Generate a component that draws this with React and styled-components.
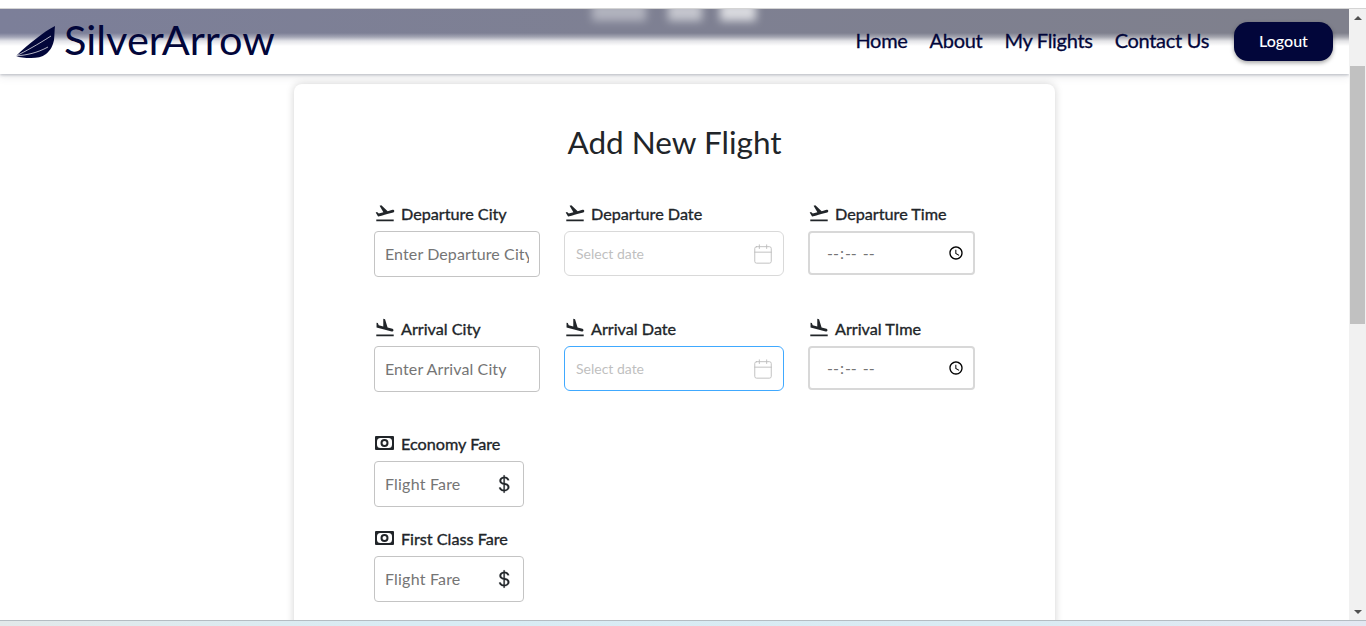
import React from 'react'
import styled, { createGlobalStyle } from 'styled-components'
import { MdFlightTakeoff, MdFlightLand } from 'react-icons/md'
import { BsCurrencyDollar } from 'react-icons/bs'
import { Calendar } from 'lucide-react'

const GlobalStyle = createGlobalStyle`
  html, body { margin: 0; height: 100%; overflow: hidden; background: #fff; }
  #root { height: 100%; }
  * { box-sizing: border-box; }
`

const Frame = styled.div`
  height: 626px;
  display: flex;
  flex-direction: column;
  font-family: Lato, "Liberation Sans", sans-serif;
  color: #212529;
`

const TopStrip = styled.div`
  height: 9px;
  flex: none;
  background: #fff;
  border-bottom: 1px solid #d4d4d4;
`

const Middle = styled.div`
  flex: 1;
  min-height: 0;
  display: flex;
`

const Page = styled.div`
  flex: 1;
  min-width: 0;
  position: relative;
  overflow: hidden;
  background: #fff;
`

const Navbar = styled.header`
  height: 65px;
  position: relative;
  display: flex;
  align-items: center;
  justify-content: space-between;
  padding: 0 16px;
  background:
    linear-gradient(to bottom, rgba(255, 255, 255, 0) 24px, rgba(255, 255, 255, 0.3) 28px, rgba(255, 255, 255, 0.78) 32px, #fff 37px),
    linear-gradient(to right, #7c7f99, #7e8093 45%, #7f808c);
  box-shadow: 0 1px 3px rgba(60, 70, 90, 0.35), 0 4px 8px rgba(60, 70, 90, 0.08);
  overflow: hidden;
`

const HeroBlur = styled.div`
  position: absolute;
  top: -6px;
  height: 18px;
  left: ${p => p.$left}px;
  width: ${p => p.$width}px;
  background: rgba(255, 255, 255, ${p => p.$alpha});
  filter: blur(4px);
`

const Brand = styled.div`
  display: flex;
  align-items: center;
  gap: 8px;
  padding-bottom: 4px;
  font-size: 41.5px;
  line-height: 1;
  color: #02063a;
  position: relative;
`

const WingSvg = styled.svg`
  margin-top: 5px;
  flex: none;
`

const Links = styled.nav`
  display: flex;
  align-items: center;
  position: relative;
`

const NavLink = styled.a`
  font-size: 20px;
  letter-spacing: -0.3px;
  margin-right: 22px;
  padding-bottom: 4px;
  color: #02063a;
  -webkit-text-stroke: 0.3px #02063a;
`

const LogoutButton = styled.button`
  width: 99px;
  height: 39px;
  margin-left: 3px;
  padding: 0 0 2px;
  border: 0;
  border-radius: 14px;
  background: #02063a;
  color: #fff;
  font: 500 16px Lato, "Liberation Sans", sans-serif;
  box-shadow: 0 2px 4px rgba(0, 0, 0, 0.35);
`

const Card = styled.main`
  width: 761px;
  margin: 10px 0 0 294px;
  height: 700px;
  padding: 38px 80px 0;
  background: #fff;
  border-radius: 8px;
  box-shadow: 0 0 8px rgba(0, 0, 0, 0.18);
`

const Title = styled.h1`
  margin: 0 0 40px;
  font-size: 31.5px;
  font-weight: 400;
  line-height: 40px;
  text-align: center;
  color: #212529;
`

const Row = styled.div`
  display: flex;
  gap: 24px;
  margin-bottom: ${p => p.$gap}px;
`

const Field = styled.div`
  width: ${p => p.$width}px;
  flex: none;
`

const Label = styled.label`
  display: flex;
  align-items: center;
  gap: 5px;
  height: 22px;
  margin-bottom: 7px;
  font-size: 16.2px;
  font-weight: 400;
  color: #212529;
  -webkit-text-stroke: 0.35px #212529;
  svg { flex: none; }
`

const TextInput = styled.input`
  width: 100%;
  height: 46px;
  padding: 0 10px 2px;
  border: 1px solid #c4c4c4;
  border-radius: 4px;
  outline: 0;
  background: #fff;
  font: 400 16px Lato, "Liberation Sans", sans-serif;
  letter-spacing: 0.1px;
  color: #495057;
  &::placeholder { color: #757575; opacity: 1; }
`

const FareBox = styled.div`
  display: flex;
  align-items: center;
  height: 46px;
  padding: 0 9px 0 10px;
  border: 1px solid #c4c4c4;
  border-radius: 4px;
`

const FareInput = styled.input`
  flex: 1;
  min-width: 0;
  border: 0;
  outline: 0;
  padding: 0 0 2px;
  font: 400 16px Lato, "Liberation Sans", sans-serif;
  letter-spacing: 0.2px;
  &::placeholder { color: #757575; opacity: 1; }
`

const DateBox = styled.div`
  display: flex;
  align-items: center;
  justify-content: space-between;
  height: 45px;
  padding: 0 9px 0 11px;
  border: 1px solid ${p => (p.$focused ? '#40a9ff' : '#d9d9d9')};
  border-radius: 6px;
  font-size: 14px;
  color: #bfbfbf;
`

const TimeInput = styled.input`
  width: 100%;
  height: 44px;
  padding: 0 5px 0 16px;
  border: 2px solid #d8d8d8;
  border-radius: 4px;
  outline: 0;
  background: #fff;
  font: 400 16px Lato, "Liberation Sans", sans-serif;
  color: #757575;
`

const Scrollbar = styled.div`
  width: 17px;
  flex: none;
  display: flex;
  flex-direction: column;
  align-items: center;
  background: #f1f1f1;
`

const ScrollArrow = styled.div`
  height: 17px;
  flex: none;
  display: flex;
  align-items: center;
  justify-content: center;
  &::before {
    content: '';
    border-left: 4px solid transparent;
    border-right: 4px solid transparent;
    ${p => (p.$up ? 'border-bottom' : 'border-top')}: 4px solid #505050;
  }
`

const ScrollThumb = styled.div`
  width: 15px;
  height: 258px;
  margin-top: 40px;
  background: #c1c1c1;
`

const ScrollSpace = styled.div`
  flex: 1;
`

const BottomStrip = styled.div`
  height: 6px;
  flex: none;
  border-top: 1px solid #b4bcc2;
  background: linear-gradient(to right, #e2e9ea, #d8ecf4 30%, #d9ebf3 75%, #e3e8f2);
`

const WingLogo = () => (
  <WingSvg width="40" height="32" viewBox="0 0 40 32" fill="#02063a">
    <path d="M39 0 C33 3 27 7 21 12 C13 18 6 24 0 30 C3 31.500 9 32 15 32 C21 32 26 31 30 28 C35 24 37 19 38 14 C38.500 9 38.500 4 39 0 Z" />
    <path d="M0 30 C10 25 21 19 35 10" stroke="#fff" strokeWidth="0.7" fill="none" />
    <path d="M0 30 C11 29 21 27 32 21" stroke="#fff" strokeWidth="0.7" fill="none" />
  </WingSvg>
)

const MoneyIcon = () => (
  <svg width="19" height="14" viewBox="0 0 19 14" style={{ margin: '0 2px 0 1px' }}>
    <rect width="19" height="14" rx="1" fill="#212529" />
    <rect x="2" y="2" width="15" height="10" rx="3.500" fill="#fff" />
    <circle cx="9.500" cy="7" r="3" fill="none" stroke="#212529" strokeWidth="2" />
  </svg>
)

const TakeoffLabel = ({ children }) => (
  <Label><MdFlightTakeoff size={22} />{children}</Label>
)

const LandLabel = ({ children }) => (
  <Label><MdFlightLand size={22} />{children}</Label>
)

const FareLabel = ({ children }) => (
  <Label><MoneyIcon />{children}</Label>
)

const DateField = ({ focused }) => (
  <DateBox $focused={focused}>
    Select date
    <Calendar size={22} strokeWidth={1} color="#bcbcbc" />
  </DateBox>
)

const FareField = ({ label }) => (
  <Field $width={150}>
    <FareLabel>{label}</FareLabel>
    <FareBox>
      <FareInput placeholder="Flight Fare" />
      <BsCurrencyDollar size={20} color="#212529" strokeWidth={0.15} />
    </FareBox>
  </Field>
)

const navItems = ['Home', 'About', 'My Flights', 'Contact Us']

const App = () => (
  <Frame>
    <GlobalStyle />
    <TopStrip />
    <Middle>
      <Page>
        <Navbar>
          <HeroBlur $left={592} $width={54} $alpha={0.4} />
          <HeroBlur $left={668} $width={34} $alpha={0.55} />
          <HeroBlur $left={720} $width={36} $alpha={0.7} />
          <Brand><WingLogo />SilverArrow</Brand>
          <Links>
            {navItems.map(item => <NavLink key={item}>{item}</NavLink>)}
            <LogoutButton>Logout</LogoutButton>
          </Links>
        </Navbar>
        <Card>
          <Title>Add New Flight</Title>
          <Row $gap={40}>
            <Field $width={166}>
              <TakeoffLabel>Departure City</TakeoffLabel>
              <TextInput placeholder="Enter Departure City" />
            </Field>
            <Field $width={220}>
              <TakeoffLabel>Departure Date</TakeoffLabel>
              <DateField />
            </Field>
            <Field $width={167}>
              <TakeoffLabel>Departure Time</TakeoffLabel>
              <TimeInput type="time" />
            </Field>
          </Row>
          <Row $gap={40}>
            <Field $width={166}>
              <LandLabel>Arrival City</LandLabel>
              <TextInput placeholder="Enter Arrival City" />
            </Field>
            <Field $width={220}>
              <LandLabel>Arrival Date</LandLabel>
              <DateField focused />
            </Field>
            <Field $width={167}>
              <LandLabel>Arrival TIme</LandLabel>
              <TimeInput type="time" />
            </Field>
          </Row>
          <Row $gap={20}><FareField label="Economy Fare" /></Row>
          <Row $gap={20}><FareField label="First Class Fare" /></Row>
        </Card>
      </Page>
      <Scrollbar>
        <ScrollArrow $up />
        <ScrollThumb />
        <ScrollSpace />
        <ScrollArrow />
      </Scrollbar>
    </Middle>
    <BottomStrip />
  </Frame>
)

export default App
